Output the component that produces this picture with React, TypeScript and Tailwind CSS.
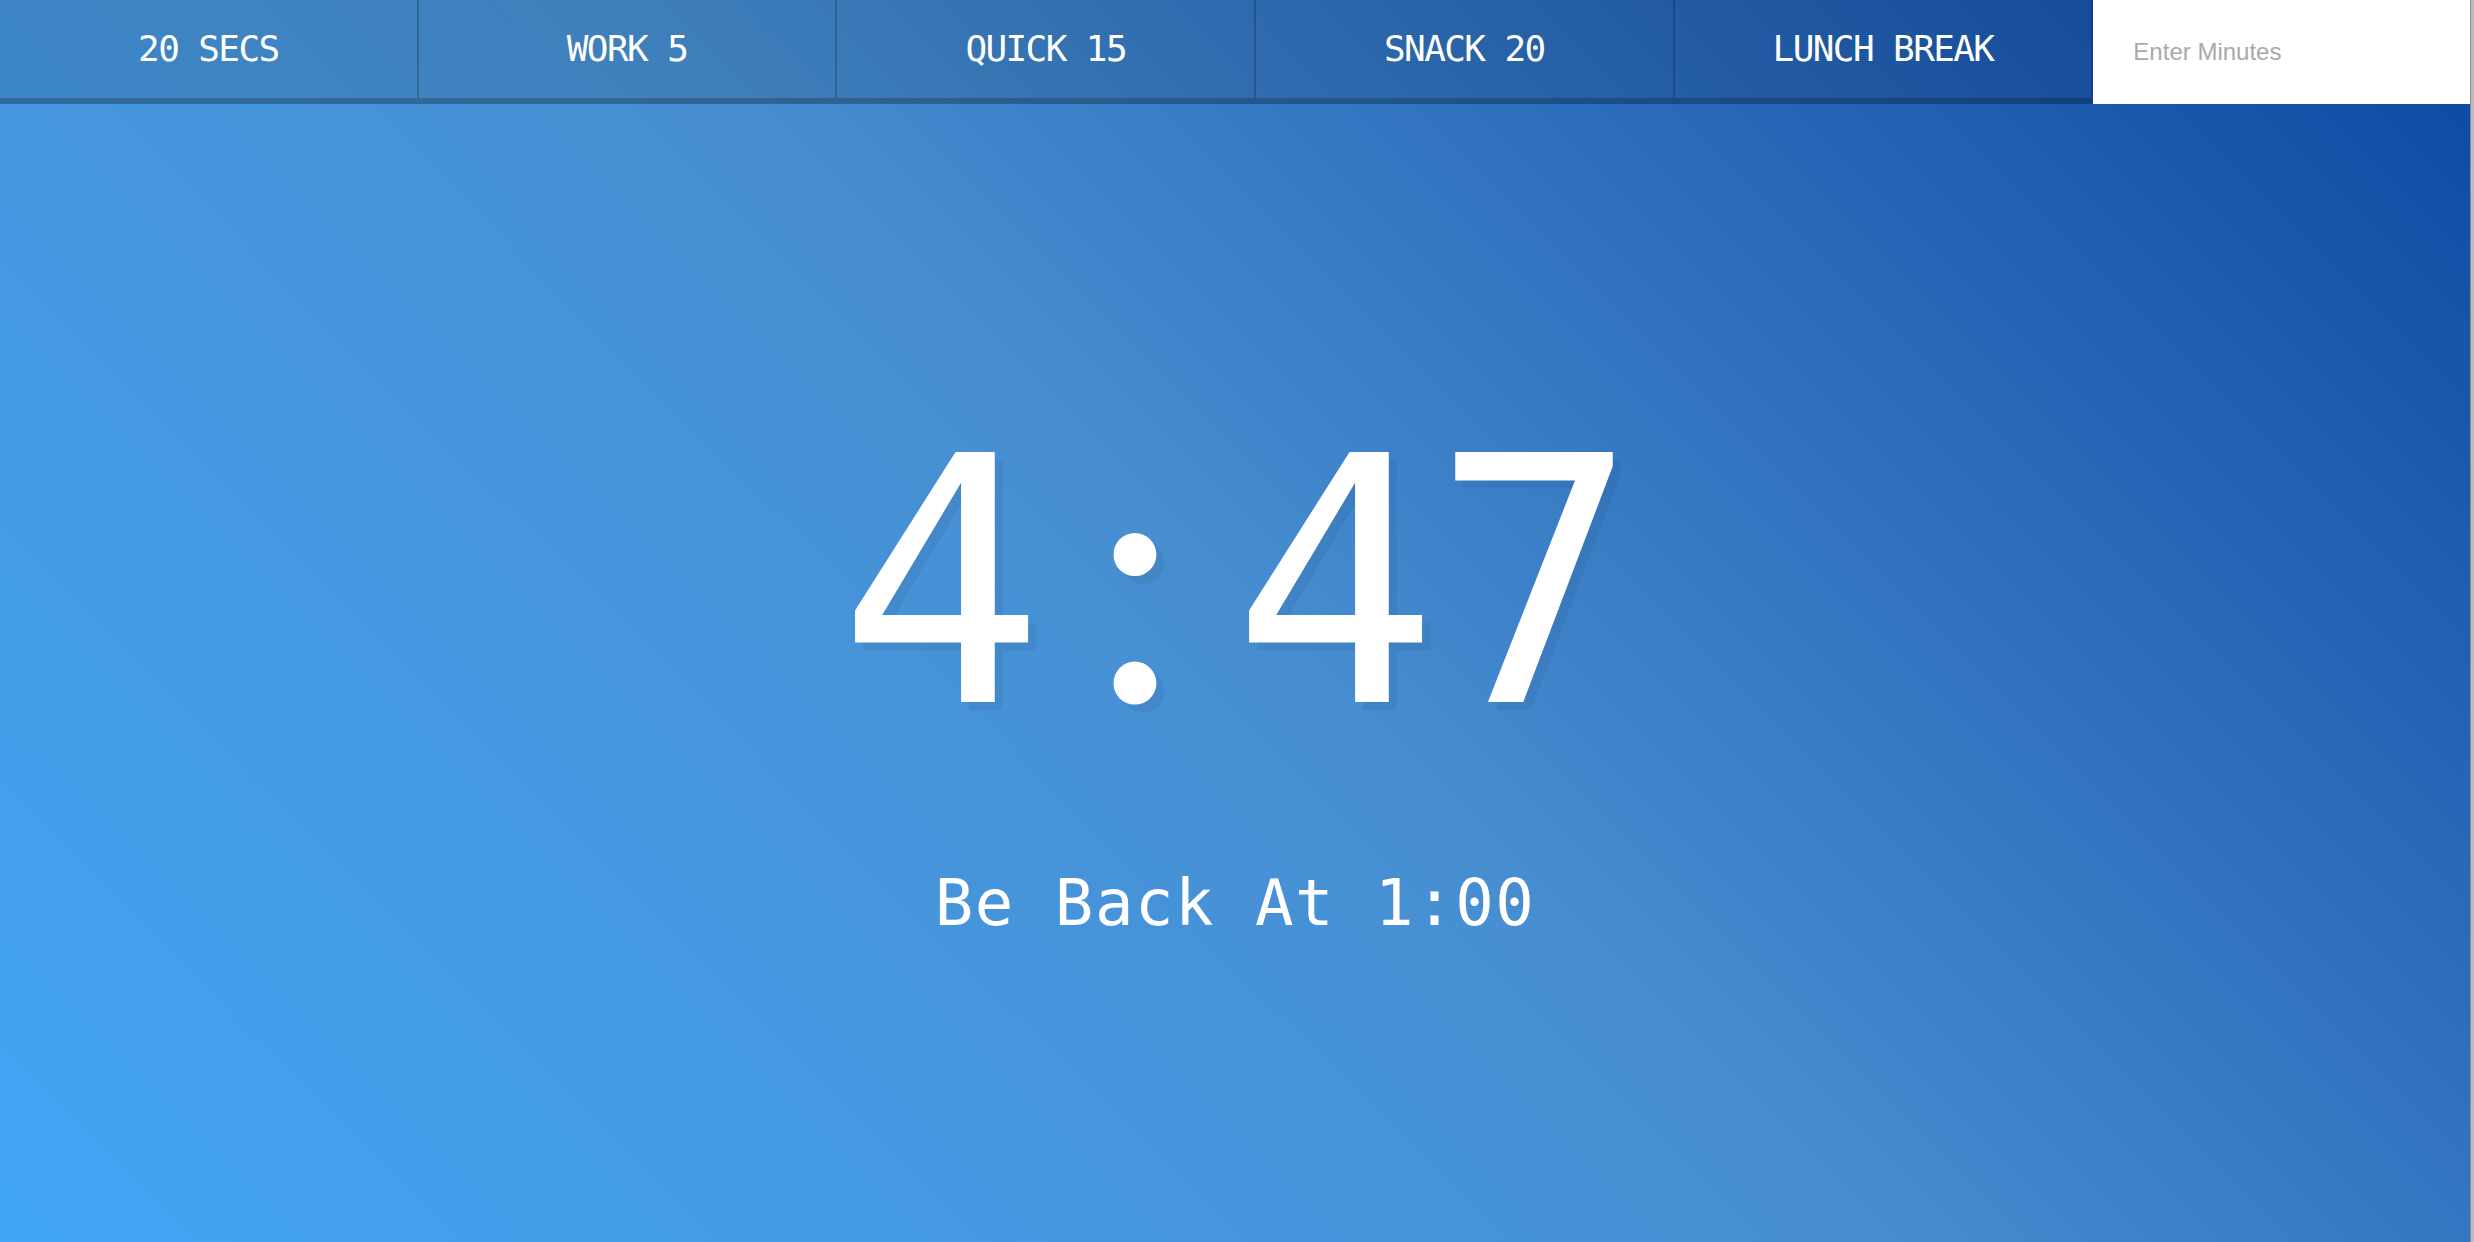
import React from "react";

const buttons = ["20 SECS", "WORK 5", "QUICK 15", "SNACK 20", "LUNCH BREAK"];

export default function App() {
  return (
    <div className="flex min-h-screen w-full">
      <div className="flex min-h-screen flex-1 flex-col bg-[linear-gradient(45deg,#42a5f5_0%,#478ed1_50%,#0d47a1_100%)] text-center font-['DejaVu_Sans_Mono',monospace]">
        <div className="flex h-[104px]">
          {buttons.map((b) => (
            <button
              key={b}
              className="flex-1 min-w-0 border-b-[6px] border-r-2 border-black/20 bg-black/10 px-5 text-[36px] tracking-[-1.6px] text-white font-['DejaVu_Sans_Mono',monospace]"
            >
              {b}
            </button>
          ))}
          <form className="flex min-w-0 flex-1" onSubmit={(e) => e.preventDefault()}>
            <input
              type="text"
              name="minutes"
              placeholder="Enter Minutes"
              className="min-w-0 w-0 flex-1 border-0 bg-white px-10 text-[24px] text-gray-800 outline-none placeholder:text-[#a9a9a9] font-['Liberation_Sans',Arial,sans-serif]"
            />
          </form>
        </div>
        <div className="flex flex-1 flex-col items-center justify-center">
          <h1 className="m-0 text-[343px] leading-none font-normal tracking-[-6.5px] text-white [text-shadow:8px_8px_0_rgba(0,0,0,0.05)]">
            4
            <span className="inline-block w-[194px] text-center leading-[0] tracking-normal font-['Lato','Open_Sans',sans-serif]">
              :
            </span>
            47
          </h1>
          <p className="mt-[116px] text-[64px] leading-none tracking-[1.5px] text-white">
            Be Back At 1:00
          </p>
        </div>
      </div>
      <div className="w-1 border-l border-[#8c8c8c] bg-[#bdbdbd]" />
    </div>
  );
}
